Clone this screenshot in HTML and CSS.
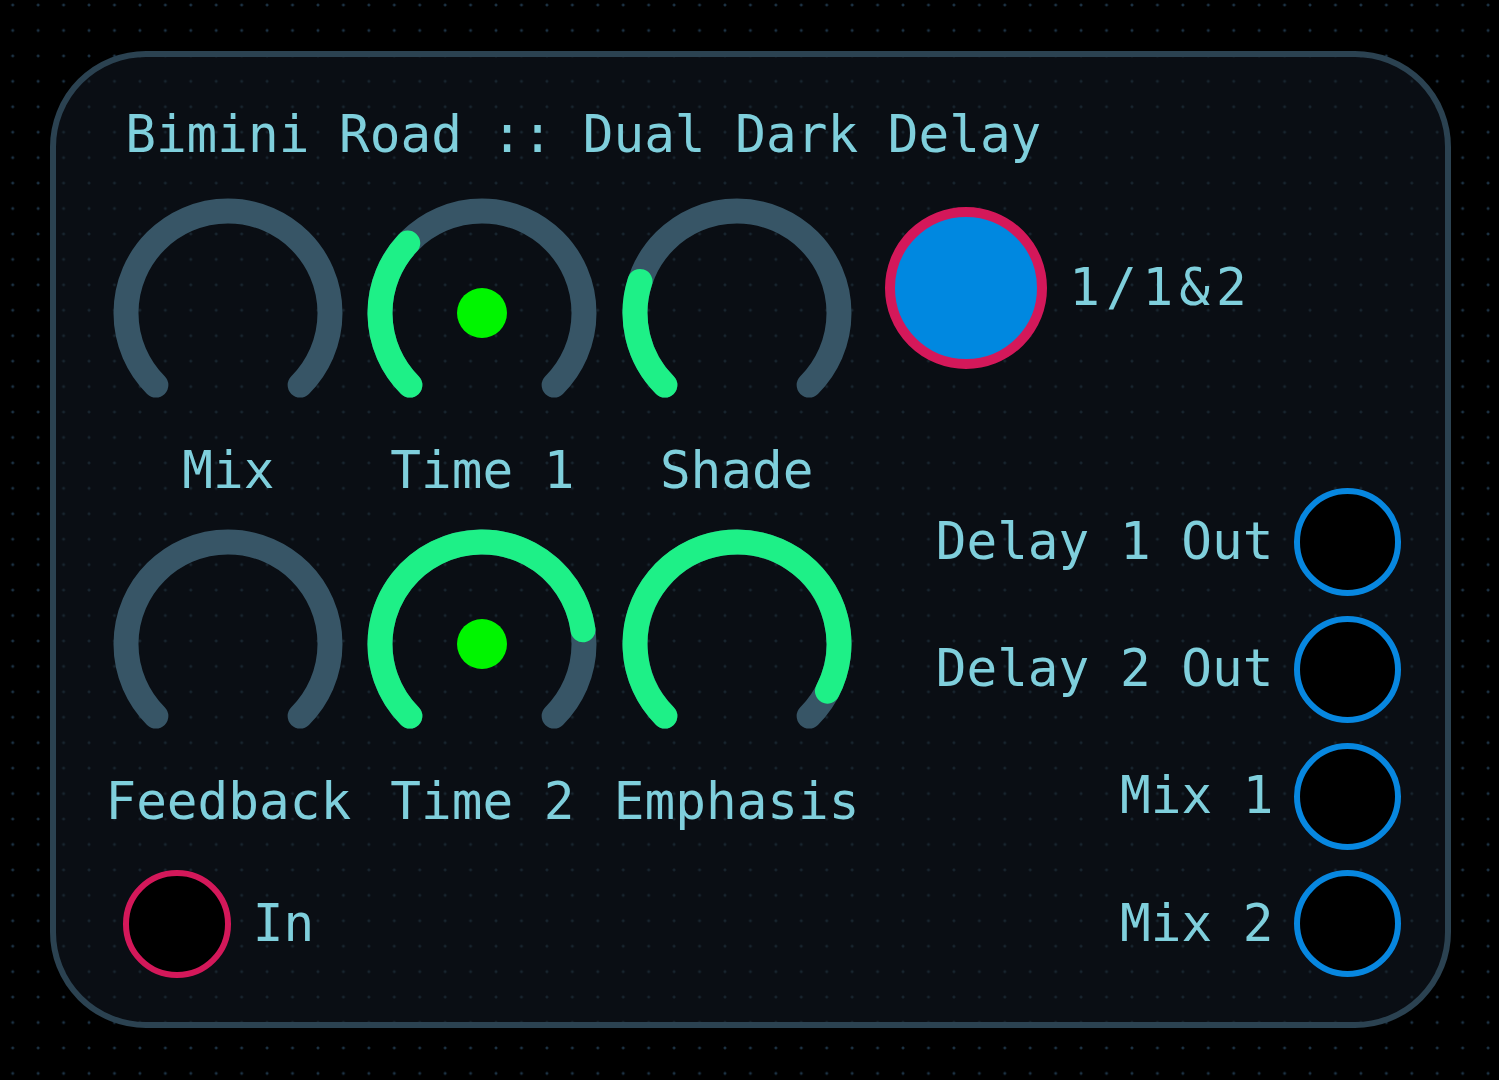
FILE: index.html
```html
<!DOCTYPE html>
<html lang="en">
<head>
<meta charset="utf-8">
<title>Bimini Road :: Dual Dark Delay</title>
<link rel="stylesheet" href="styles.css">
</head>
<body>
<div class="panel">
  <div class="title">Bimini Road :: Dual Dark Delay</div>

  <div class="left">
    <div class="knobs">
      <div class="knob">
        <svg class="knob-svg" viewBox="0 0 230 230" width="230" height="230">
          <path class="track" d="M 42.88 187.12 A 102 102 0 1 1 187.12 187.12"/>
        </svg>
        <div class="label">Mix</div>
      </div>
      <div class="knob">
        <svg class="knob-svg" viewBox="0 0 230 230" width="230" height="230">
          <path class="track" d="M 42.88 187.12 A 102 102 0 1 1 187.12 187.12"/>
          <path class="value" d="M 42.88 187.12 A 102 102 0 0 1 40.76 45.05"/>
          <circle class="dot" cx="115" cy="115" r="25"/>
        </svg>
        <div class="label">Time 1</div>
      </div>
      <div class="knob">
        <svg class="knob-svg" viewBox="0 0 230 230" width="230" height="230">
          <path class="track" d="M 42.88 187.12 A 102 102 0 1 1 187.12 187.12"/>
          <path class="value" d="M 42.88 187.12 A 102 102 0 0 1 17.99 83.48"/>
        </svg>
        <div class="label">Shade</div>
      </div>
      <div class="knob">
        <svg class="knob-svg" viewBox="0 0 230 230" width="230" height="230">
          <path class="track" d="M 42.88 187.12 A 102 102 0 1 1 187.12 187.12"/>
        </svg>
        <div class="label">Feedback</div>
      </div>
      <div class="knob">
        <svg class="knob-svg" viewBox="0 0 230 230" width="230" height="230">
          <path class="track" d="M 42.88 187.12 A 102 102 0 1 1 187.12 187.12"/>
          <path class="value" d="M 42.88 187.12 A 102 102 0 1 1 216.01 100.80"/>
          <circle class="dot" cx="115" cy="115" r="25"/>
        </svg>
        <div class="label">Time 2</div>
      </div>
      <div class="knob">
        <svg class="knob-svg" viewBox="0 0 230 230" width="230" height="230">
          <path class="track" d="M 42.88 187.12 A 102 102 0 1 1 187.12 187.12"/>
          <path class="value" d="M 42.88 187.12 A 102 102 0 1 1 205.47 162.09"/>
        </svg>
        <div class="label">Emphasis</div>
      </div>
    </div>

    <div class="in-row">
      <div class="jack jack-in"></div>
      <div class="label">In</div>
    </div>
  </div>

  <div class="right">
    <div class="mode">
      <div class="button"></div>
      <div class="label mode-label">1/1&amp;2</div>
    </div>
    <div class="outs">
      <div class="out"><div class="label">Delay 1 Out</div><div class="jack jack-out"></div></div>
      <div class="out"><div class="label">Delay 2 Out</div><div class="jack jack-out"></div></div>
      <div class="out"><div class="label">Mix 1</div><div class="jack jack-out"></div></div>
      <div class="out"><div class="label">Mix 2</div><div class="jack jack-out"></div></div>
    </div>
  </div>
</div>
</body>
</html>
```

FILE: styles.css
```css
html, body {
  margin: 0;
  padding: 0;
  width: 1499px;
  height: 1080px;
  overflow: hidden;
}

body {
  background-color: #000;
  background-image: radial-gradient(circle, #1d3345 1.1px, rgba(0,0,0,0) 1.8px);
  background-size: 25.45px 25.45px;
  background-position: 0 -7.7px;
  background-attachment: fixed;
  padding: 51px 0 0 50px;
  box-sizing: border-box;
  font-family: "DejaVu Sans Mono", "Liberation Mono", monospace;
  color: #7fcfdc;
}

.panel {
  box-sizing: border-box;
  width: 1401px;
  height: 977px;
  border: 6px solid #2b4251;
  border-radius: 96px;
  background-color: #0a0e14;
  background-image: radial-gradient(circle, #18252f 1.1px, rgba(0,0,0,0) 1.8px);
  background-size: 25.45px 25.45px;
  background-position: 0 -7.7px;
  background-attachment: fixed;
  padding: 47.5px 44px 0 45.2px;
  display: grid;
  grid-template-columns: 762.6px 1fr;
  grid-template-rows: auto 1fr;
}

.label {
  font-size: 51px;
  line-height: 60px;
  white-space: nowrap;
}

.title {
  grid-column: 1 / -1;
  font-size: 51px;
  line-height: 60px;
  white-space: nowrap;
  margin-left: 24px;
  word-spacing: -1px;
}

.left {
  display: flex;
  flex-direction: column;
  padding-top: 33.8px;
}

.knobs {
  display: grid;
  grid-template-columns: repeat(3, 254.2px);
  row-gap: 27.3px;
}

.knob {
  display: flex;
  flex-direction: column;
  align-items: center;
  gap: 13px;
}

.knob-svg {
  display: block;
  width: 230px;
  height: 230px;
}

.track {
  fill: none;
  stroke: #375566;
  stroke-width: 25;
  stroke-linecap: round;
}

.value {
  fill: none;
  stroke: #1ef087;
  stroke-width: 25;
  stroke-linecap: round;
}

.dot {
  fill: #00f500;
}

.in-row {
  display: flex;
  align-items: center;
  gap: 22px;
  margin-top: 38.7px;
  margin-left: 22px;
}

.jack {
  box-sizing: border-box;
  width: 107.5px;
  height: 107.5px;
  border-radius: 50%;
  background: #000;
  flex: none;
}

.jack-in {
  border: 6px solid #d4185a;
}

.jack-out {
  border: 6px solid #0787e0;
}

.right {
  display: flex;
  flex-direction: column;
  padding-top: 42.1px;
}

.mode {
  display: flex;
  align-items: center;
  gap: 22px;
  margin-left: 21px;
}

.mode-label {
  letter-spacing: 6px;
}

.button {
  box-sizing: border-box;
  width: 162.4px;
  height: 162.4px;
  border-radius: 50%;
  border: 10px solid #d4185a;
  background: #0088e0;
  flex: none;
}

.outs {
  display: flex;
  flex-direction: column;
  align-items: flex-end;
  gap: 19.6px;
  margin-top: 119.5px;
}

.out {
  display: flex;
  align-items: center;
  gap: 20px;
}
```
